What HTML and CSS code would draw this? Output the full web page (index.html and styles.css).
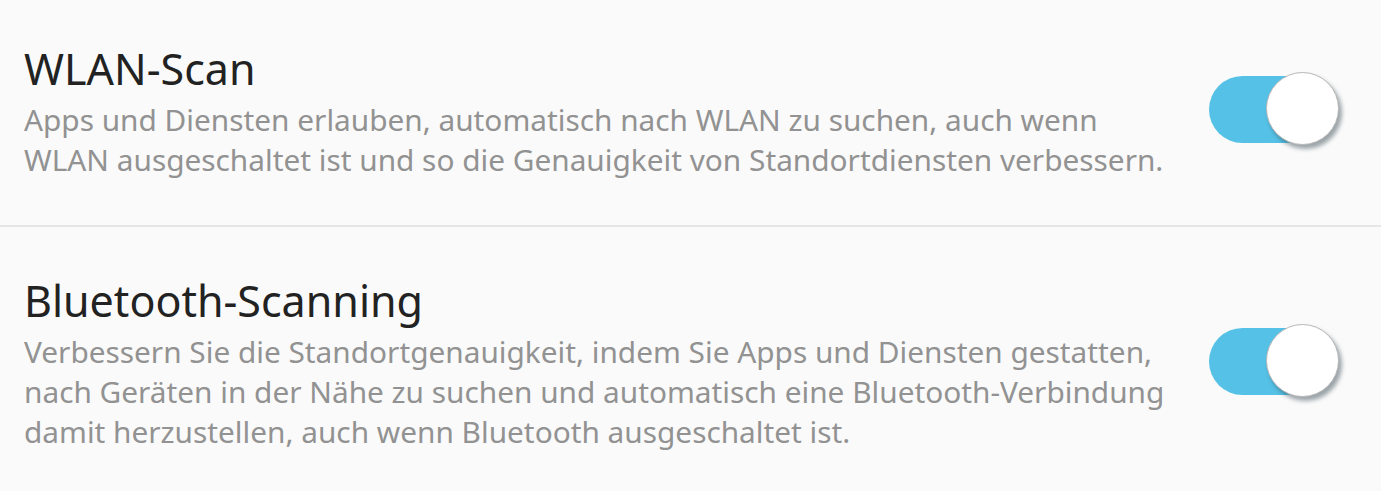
FILE: index.html
```html
<!DOCTYPE html>
<html lang="de">
<head>
  <meta charset="UTF-8">
  <title>Standortgenauigkeit verbessern</title>
  <link rel="stylesheet" href="styles.css">
</head>
<body>
  <div class="liste">
    <div class="eintrag erster">
      <div class="texte">
        <div class="titel">WLAN-Scan</div>
        <div class="beschreibung">Apps und Diensten erlauben, automatisch nach WLAN zu suchen, auch wenn WLAN ausgeschaltet ist und so die Genauigkeit von Standortdiensten verbessern.</div>
      </div>
      <div class="schalter an"><span class="knopf"></span></div>
    </div>
    <div class="eintrag">
      <div class="texte">
        <div class="titel">Bluetooth-Scanning</div>
        <div class="beschreibung">Verbessern Sie die Standortgenauigkeit, indem Sie Apps und Diensten gestatten, nach Geräten in der Nähe zu suchen und automatisch eine Bluetooth&#8209;Verbindung damit herzustellen, auch wenn Bluetooth ausgeschaltet ist.</div>
      </div>
      <div class="schalter an"><span class="knopf"></span></div>
    </div>
  </div>
</body>
</html>
```

FILE: styles.css
```css
body { margin: 0; background: #fafafa; font-family: "Noto Sans", sans-serif; }
.liste { display: flex; flex-direction: column; }
.eintrag { display: flex; align-items: center; padding: 48px 42px 39px 24px; }
.eintrag.erster { border-bottom: 2px solid #e6e6e6; padding-top: 43px; padding-bottom: 45px; }
.texte { flex: 1; max-width: 1152px; }
.titel { font-size: 43px; line-height: 52px; color: #222; }
.beschreibung { font-size: 29.8px; line-height: 40px; color: #929292; margin-top: 5px; }
.schalter { position: relative; width: 130px; height: 74px; margin-left: auto; margin-bottom: 5px; }
.schalter::before { content: ""; position: absolute; left: 0; top: 4px; width: 110px; height: 67px; border-radius: 34px; background: #56c1e6; }
.knopf { position: absolute; right: 0; top: 0; width: 71px; height: 71px; border-radius: 50%; background: #fff; border: 1px solid #b8b8b8; box-shadow: 3px 4px 4px rgba(40, 60, 70, 0.45); }
```
